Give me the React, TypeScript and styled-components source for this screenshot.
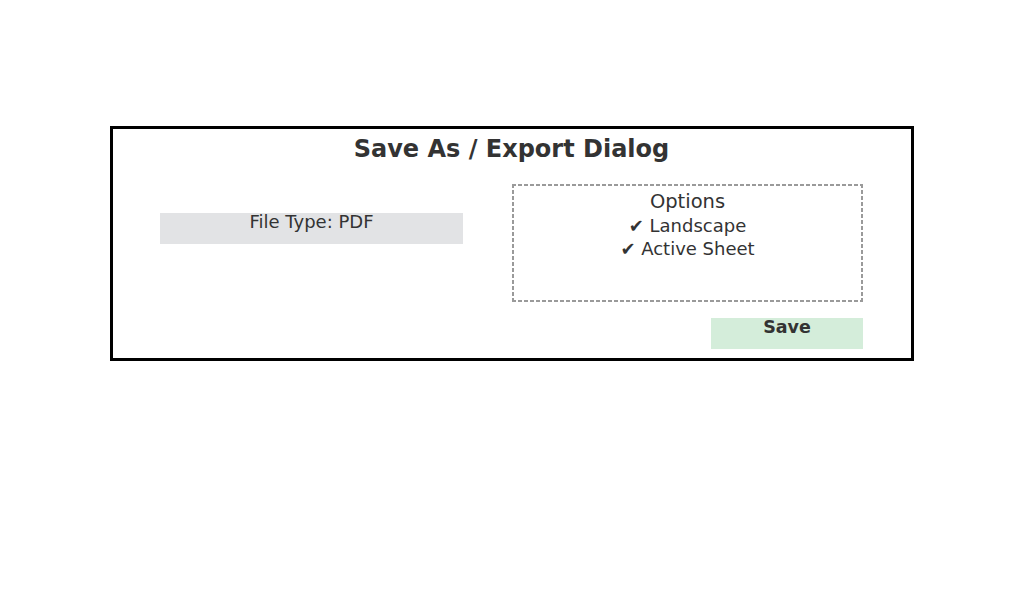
import React from "react";
import styled, { createGlobalStyle } from "styled-components";

const Global = createGlobalStyle`
	html, body {
		margin: 0;
		padding: 0;
		background: #ffffff;
	}
	body {
		font-family: "DejaVu Sans", "Liberation Sans", sans-serif;
		color: #333333;
	}
`;

const Page = styled.div`
	width: 1024px;
	height: 603px;
	padding: 126px 0 0 110px;
	box-sizing: border-box;
`;

const Frame = styled.section`
	width: 804px;
	box-sizing: border-box;
	border: 3px solid #000000;
	padding: 6px 48px 9px 47px;
	display: flex;
	flex-direction: column;
`;

const Title = styled.h1`
	margin: 0;
	font-size: 24px;
	line-height: 28px;
	font-weight: bold;
	text-align: center;
	color: #333333;
`;

const Body = styled.div`
	display: flex;
	align-items: flex-start;
	gap: 49px;
	margin-top: 21px;
`;

const FileType = styled.div`
	width: 303px;
	height: 31px;
	margin-top: 29px;
	background: #e2e3e5;
	font-size: 18px;
	line-height: 18px;
	text-align: center;
`;

// dashed outline drawn with gradients for a 4px dash / 2px gap pattern
const dash = "#9a9a9a";
const Options = styled.div`
	width: 351px;
	height: 118px;
	box-sizing: border-box;
	padding-top: 6px;
	display: flex;
	flex-direction: column;
	align-items: center;
	background:
		repeating-linear-gradient(90deg, ${dash} 0 4px, transparent 4px 6px) top left / 100% 2px no-repeat,
		repeating-linear-gradient(90deg, ${dash} 0 4px, transparent 4px 6px) bottom left / 100% 2px no-repeat,
		repeating-linear-gradient(180deg, ${dash} 0 4px, transparent 4px 6px) top left / 2px 100% no-repeat,
		repeating-linear-gradient(180deg, ${dash} 0 4px, transparent 4px 6px) top right / 2px 100% no-repeat;
`;

const OptionLine = styled.div<{ $heading?: boolean }>`
	font-size: ${(p) => (p.$heading ? "19.5px" : "18px")};
	line-height: 23.5px;
`;

const Footer = styled.div`
	display: flex;
	justify-content: flex-end;
	margin-top: 16px;
`;

const SaveButton = styled.button`
	width: 152px;
	height: 31px;
	border: none;
	padding: 0;
	background: #d4edda;
	color: #333333;
	font-family: "DejaVu Sans", "Liberation Sans", sans-serif;
	font-size: 17.5px;
	font-weight: bold;
	line-height: 18px;
	display: flex;
	justify-content: center;
	align-items: flex-start;
`;

export default function App() {
	return (
		<>
			<Global />
			<Page>
				<Frame>
					<Title>Save As / Export Dialog</Title>
					<Body>
						<FileType>File Type: PDF</FileType>
						<Options>
							<OptionLine $heading>Options</OptionLine>
							<OptionLine>✔ Landscape</OptionLine>
							<OptionLine>✔ Active Sheet</OptionLine>
						</Options>
					</Body>
					<Footer>
						<SaveButton>Save</SaveButton>
					</Footer>
				</Frame>
			</Page>
		</>
	);
}
